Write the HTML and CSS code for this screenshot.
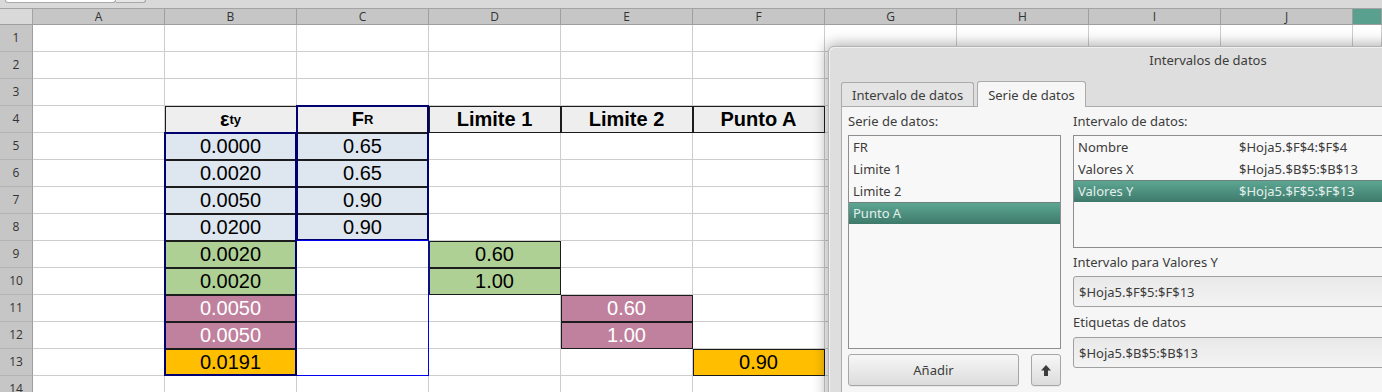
FILE: index.html
```html
<!DOCTYPE html>
<html lang="es">
<head>
<meta charset="utf-8">
<title>Intervalos de datos</title>
<link rel="stylesheet" href="styles.css">
</head>
<body>
<div class="topbar"><div class="namebox"></div><div class="namebtn"></div></div>
<div class="sheetwrap">
<div class="sheet">
  <div class="corner"></div>
  <div class="colh">A</div><div class="colh">B</div><div class="colh">C</div><div class="colh">D</div><div class="colh">E</div><div class="colh">F</div><div class="colh">G</div><div class="colh">H</div><div class="colh">I</div><div class="colh">J</div><div class="colh cur"></div>

  <div class="rowh">1</div><div class="c"></div><div class="c"></div><div class="c"></div><div class="c"></div><div class="c"></div><div class="c"></div><div class="c"></div><div class="c"></div><div class="c"></div><div class="c"></div><div class="c"></div>
  <div class="rowh">2</div><div class="c"></div><div class="c"></div><div class="c"></div><div class="c"></div><div class="c"></div><div class="c"></div><div class="c"></div><div class="c"></div><div class="c"></div><div class="c"></div><div class="c"></div>
  <div class="rowh">3</div><div class="c"></div><div class="c"></div><div class="c"></div><div class="c"></div><div class="c"></div><div class="c"></div><div class="c"></div><div class="c"></div><div class="c"></div><div class="c"></div><div class="c"></div>
  <div class="rowh">4</div><div class="c"></div>
    <div class="c b hd">ε<span class="sub">ty</span></div>
    <div class="c b hd">F<span class="sub">R</span></div>
    <div class="c b hd">Limite 1</div>
    <div class="c b hd">Limite 2</div>
    <div class="c b hd">Punto A</div>
    <div class="c"></div><div class="c"></div><div class="c"></div><div class="c"></div><div class="c"></div>
  <div class="rowh">5</div><div class="c"></div><div class="c b bl">0.0000</div><div class="c b bl">0.65</div><div class="c"></div><div class="c"></div><div class="c"></div><div class="c"></div><div class="c"></div><div class="c"></div><div class="c"></div><div class="c"></div>
  <div class="rowh">6</div><div class="c"></div><div class="c b bl">0.0020</div><div class="c b bl">0.65</div><div class="c"></div><div class="c"></div><div class="c"></div><div class="c"></div><div class="c"></div><div class="c"></div><div class="c"></div><div class="c"></div>
  <div class="rowh">7</div><div class="c"></div><div class="c b bl">0.0050</div><div class="c b bl">0.90</div><div class="c"></div><div class="c"></div><div class="c"></div><div class="c"></div><div class="c"></div><div class="c"></div><div class="c"></div><div class="c"></div>
  <div class="rowh">8</div><div class="c"></div><div class="c b bl">0.0200</div><div class="c b bl">0.90</div><div class="c"></div><div class="c"></div><div class="c"></div><div class="c"></div><div class="c"></div><div class="c"></div><div class="c"></div><div class="c"></div>
  <div class="rowh">9</div><div class="c"></div><div class="c b gr">0.0020</div><div class="c"></div><div class="c b gr">0.60</div><div class="c"></div><div class="c"></div><div class="c"></div><div class="c"></div><div class="c"></div><div class="c"></div><div class="c"></div>
  <div class="rowh">10</div><div class="c"></div><div class="c b gr">0.0020</div><div class="c"></div><div class="c b gr">1.00</div><div class="c"></div><div class="c"></div><div class="c"></div><div class="c"></div><div class="c"></div><div class="c"></div><div class="c"></div>
  <div class="rowh">11</div><div class="c"></div><div class="c b mv">0.0050</div><div class="c"></div><div class="c"></div><div class="c b mv">0.60</div><div class="c"></div><div class="c"></div><div class="c"></div><div class="c"></div><div class="c"></div><div class="c"></div>
  <div class="rowh">12</div><div class="c"></div><div class="c b mv">0.0050</div><div class="c"></div><div class="c"></div><div class="c b mv">1.00</div><div class="c"></div><div class="c"></div><div class="c"></div><div class="c"></div><div class="c"></div><div class="c"></div>
  <div class="rowh">13</div><div class="c"></div><div class="c b or">0.0191</div><div class="c"></div><div class="c"></div><div class="c"></div><div class="c b or">0.90</div><div class="c"></div><div class="c"></div><div class="c"></div><div class="c"></div><div class="c"></div>
  <div class="rowh">14</div><div class="c"></div><div class="c"></div><div class="c"></div><div class="c"></div><div class="c"></div><div class="c"></div><div class="c"></div><div class="c"></div><div class="c"></div><div class="c"></div><div class="c"></div>
</div>
<div class="ranges">
  <div class="rng rng-b"></div>
  <div class="rng rng-c1"></div>
  <div class="rng rng-c2"></div>
</div>
</div>

<div class="dialog">
  <div class="title">Intervalos de datos</div>
  <div class="dbody">
    <div class="tabs">
      <div class="tab">Intervalo de datos</div>
      <div class="tab on">Serie de datos</div>
    </div>
    <div class="panel">
      <div class="col">
        <div class="lbl">Serie de datos:</div>
        <div class="list list-series">
          <div class="item">FR</div>
          <div class="item">Limite 1</div>
          <div class="item">Limite 2</div>
          <div class="item sel">Punto A</div>
        </div>
        <div class="btnrow">
          <div class="btn add">Añadir</div>
          <div class="btn up"><svg width="10" height="11" viewBox="0 0 10 11"><path d="M5 0 L10 5.5 L7 5.5 L7 11 L3 11 L3 5.5 L0 5.5 Z" fill="#3c3c3c"/></svg></div>
        </div>
      </div>
      <div class="col">
        <div class="lbl">Intervalo de datos:</div>
        <div class="list list-ranges">
          <div class="item"><span class="nm">Nombre</span><span>$Hoja5.$F$4:$F$4</span></div>
          <div class="item"><span class="nm">Valores X</span><span>$Hoja5.$B$5:$B$13</span></div>
          <div class="item sel"><span class="nm">Valores Y</span><span>$Hoja5.$F$5:$F$13</span></div>
        </div>
        <div class="lbl lbl2">Intervalo para Valores Y</div>
        <div class="inp">$Hoja5.$F$5:$F$13</div>
        <div class="lbl lbl3">Etiquetas de datos</div>
        <div class="inp">$Hoja5.$B$5:$B$13</div>
      </div>
    </div>
  </div>
</div>
</body>
</html>
```

FILE: styles.css
```css
* { box-sizing: border-box; margin: 0; padding: 0; }
html, body { width: 1382px; height: 392px; overflow: hidden; background: #fff; }
body { position: relative; font-family: "Open Sans", "Noto Sans", sans-serif; }

.topbar {
  height: 9px;
  background: #d9d9d9;
  border-bottom: 1px solid #a3a3a3;
  display: flex;
  align-items: flex-start;
  padding-left: 5px;
}
.namebox {
  width: 111px; height: 3px; background: #fff;
  border: 1px solid #a8a8a8; border-top: none;
  border-radius: 0 0 3px 3px;
}
.namebtn {
  width: 30px; height: 3px; background: #e6e6e6;
  border: 1px solid #a8a8a8; border-top: none; border-left: none;
  border-radius: 0 0 3px 0;
}

.sheetwrap { display: grid; }
.sheet, .ranges {
  grid-area: 1 / 1;
  display: grid;
  grid-template-columns: 33px repeat(10, 132px) 1fr;
  grid-template-rows: 16px repeat(14, 27px);
}
.ranges { pointer-events: none; z-index: 2; }
.corner { background: #d9d9d9; border-right: 1px solid #a3a3a3; border-bottom: 1px solid #9e9e9e; }
.colh {
  background: #c6c6c6;
  border-right: 1px solid #9e9e9e;
  border-bottom: 1px solid #9e9e9e;
  font-size: 12px; color: #333;
  display: flex; align-items: center; justify-content: center;
  line-height: 1;
}
.colh.cur { background: #5aa08f; }
.rowh {
  background: #c6c6c6;
  border-right: 1px solid #9e9e9e;
  border-bottom: 1px solid #b4b4b4;
  font-size: 12px; color: #333;
  display: flex; align-items: center; justify-content: center;
  line-height: 1;
}
.c {
  border-right: 1px solid #cdcdcd;
  border-bottom: 1px solid #cdcdcd;
  font-family: "Liberation Sans", Arial, sans-serif;
  font-size: 20px; color: #000;
  display: flex; align-items: center; justify-content: center;
  line-height: 1;
  white-space: nowrap;
}
.c.b { border-color: #1c1c1c; box-shadow: inset 1px 1px 0 #1c1c1c; }
.hd { background: #eeeeee; font-weight: bold; }
.bl { background: #dee6ef; }
.gr { background: #afd095; }
.mv { background: #bf819e; color: #fff; }
.or { background: #ffbf00; }
.sub { font-size: 13px; vertical-align: -2px; }

.rng-b { grid-column: 3; grid-row: 6 / 15; margin: -1px 0 0 -1px; border: 2px solid #00006e; }
.rng-c1 { grid-column: 4; grid-row: 5 / 10; margin: -1px 0 0 -1px; border: 2px solid #00006e; }
.rng-c2 { grid-column: 4; grid-row: 10 / 15; margin: -1px 0 0 0; border: 1px solid #0000ee; border-left: none; }

.dialog {
  position: absolute; left: 828px; top: 46px;
  width: 760px; height: 360px;
  background: #dedede;
  border: 1px solid #b4b4b4;
  border-radius: 6px 6px 0 0;
  box-shadow: 0 0 14px 2px rgba(0, 0, 0, 0.32), inset 1px 1px 0 #f0f0f0;
  display: flex; flex-direction: column;
  font-family: "Noto Sans", "Open Sans", sans-serif;
  font-size: 13px; color: #3c3c3c;
  z-index: 5;
}
.title { height: 26px; display: flex; align-items: center; justify-content: center; }
.dbody { flex: 1; padding: 8px 0 0 12px; display: flex; flex-direction: column; }
.tabs { display: flex; gap: 3px; align-items: flex-end; height: 26px; margin-bottom: -1px; position: relative; z-index: 1; }
.tab {
  height: 24px; margin-bottom: 1px;
  padding: 0 10px 0 10px;
  border: 1px solid #ababab; border-bottom: none;
  border-radius: 3px 3px 0 0;
  background: #e4e4e4;
  display: flex; align-items: center;
  white-space: nowrap;
}
.tab.on { height: 26px; margin-bottom: 0; background: #f6f6f6; }
.panel {
  flex: 1;
  background: #f6f6f6;
  border-top: 1px solid #ababab; border-left: 1px solid #ababab;
  display: grid; grid-template-columns: 213px 1fr; column-gap: 12px;
  padding-left: 6px;
}
.col { display: flex; flex-direction: column; }
.lbl { height: 28px; display: flex; align-items: center; white-space: nowrap; }
.list { background: #f8f8f8; border: 1px solid #8e8e8e; }
.list-series { height: 214px; }
.list-ranges { height: 113px; }
.item { height: 22px; padding-left: 4px; display: flex; align-items: center; white-space: nowrap; }
.item .nm { width: 161px; }
.item.sel {
  background: linear-gradient(#5ea894, #3e7a6b);
  color: #e4efec;
  box-shadow: inset 0 1px 0 #6f7f7a;
}
.btnrow { display: flex; margin-top: 5px; justify-content: space-between; }
.btn {
  height: 32px;
  border: 1px solid #a6a6a6; border-radius: 3px;
  background: linear-gradient(#f7f7f7, #dcdcdc);
  display: flex; align-items: center; justify-content: center;
  box-shadow: 0 1px 0 rgba(0,0,0,0.05);
}
.btn.add { width: 171px; }
.btn.up { width: 30px; }
.lbl2 { height: 28px; }
.lbl3 { height: 30px; }
.inp {
  height: 31px;
  border: 1px solid #a0a0a0; border-radius: 3px;
  background: linear-gradient(#e9e9e9, #f3f3f3);
  display: flex; align-items: center; padding-left: 5px;
  white-space: nowrap;
}
```
